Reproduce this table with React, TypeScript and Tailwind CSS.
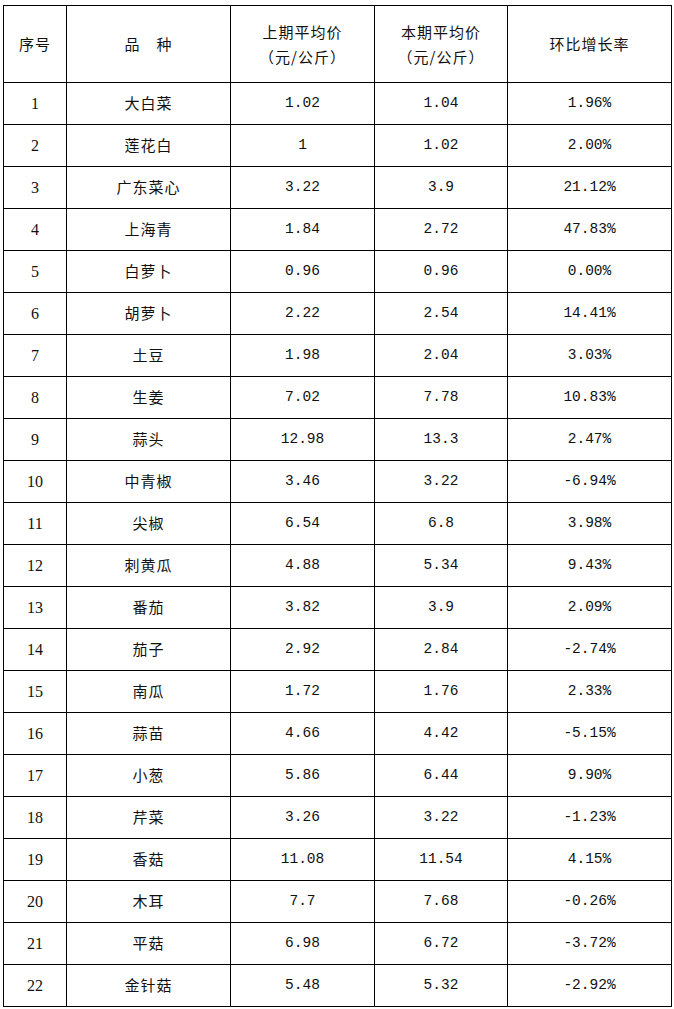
const rows: [string, string, string, string][] = [
  ['大白菜', '1.02', '1.04', '1.96%'],
  ['莲花白', '1', '1.02', '2.00%'],
  ['广东菜心', '3.22', '3.9', '21.12%'],
  ['上海青', '1.84', '2.72', '47.83%'],
  ['白萝卜', '0.96', '0.96', '0.00%'],
  ['胡萝卜', '2.22', '2.54', '14.41%'],
  ['土豆', '1.98', '2.04', '3.03%'],
  ['生姜', '7.02', '7.78', '10.83%'],
  ['蒜头', '12.98', '13.3', '2.47%'],
  ['中青椒', '3.46', '3.22', '-6.94%'],
  ['尖椒', '6.54', '6.8', '3.98%'],
  ['刺黄瓜', '4.88', '5.34', '9.43%'],
  ['番茄', '3.82', '3.9', '2.09%'],
  ['茄子', '2.92', '2.84', '-2.74%'],
  ['南瓜', '1.72', '1.76', '2.33%'],
  ['蒜苗', '4.66', '4.42', '-5.15%'],
  ['小葱', '5.86', '6.44', '9.90%'],
  ['芹菜', '3.26', '3.22', '-1.23%'],
  ['香菇', '11.08', '11.54', '4.15%'],
  ['木耳', '7.7', '7.68', '-0.26%'],
  ['平菇', '6.98', '6.72', '-3.72%'],
  ['金针菇', '5.48', '5.32', '-2.92%'],
];

const cjk = "font-['Noto_Sans_CJK_SC',sans-serif] text-[15px] tracking-[1px]";
const num = "font-['Liberation_Mono','Noto_Sans_CJK_SC',monospace] text-[14.5px]";

export default function App() {
  return (
    <div className="w-[674px] h-[1009px] bg-white pt-[5px] pl-[3px]">
      <table className="border-collapse table-fixed w-[668px] text-[#111]">
        <colgroup>
          <col className="w-[63px]" />
          <col className="w-[164px]" />
          <col className="w-[144px]" />
          <col className="w-[133px]" />
          <col className="w-[164px]" />
        </colgroup>
        <thead>
          <tr className="h-[77px]">
            <th className={`border border-black font-normal text-center ${cjk}`}>序号</th>
            <th className={`border border-black font-normal text-center ${cjk}`}>品　种</th>
            <th className={`border border-black font-normal text-center leading-[25px] ${cjk}`}>
              上期平均价<br />（元/公斤）
            </th>
            <th className={`border border-black font-normal text-center leading-[25px] ${cjk}`}>
              本期平均价<br />（元/公斤）
            </th>
            <th className={`border border-black font-normal text-center ${cjk}`}>环比增长率</th>
          </tr>
        </thead>
        <tbody>
          {rows.map((r, i) => (
            <tr key={i} className="h-[42px]">
              <td className="border border-black text-center font-['Liberation_Serif',serif] text-[16px]">{i + 1}</td>
              <td className={`border border-black text-center ${cjk}`}>{r[0]}</td>
              <td className={`border border-black text-center ${num}`}>{r[1]}</td>
              <td className={`border border-black text-center ${num}`}>{r[2]}</td>
              <td className={`border border-black text-center ${num}`}>{r[3]}</td>
            </tr>
          ))}
        </tbody>
      </table>
    </div>
  );
}
